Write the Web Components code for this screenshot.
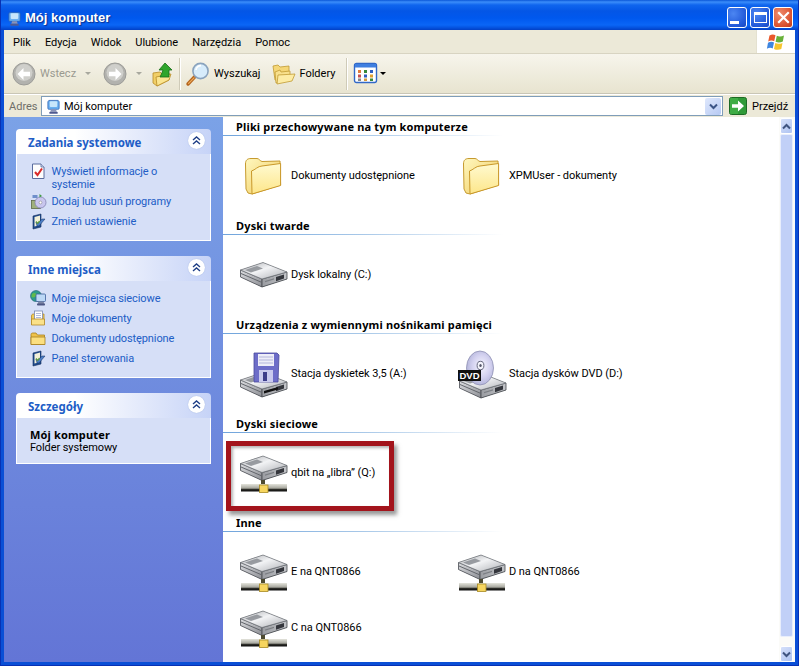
<!DOCTYPE html>
<html lang="pl">
<head>
<meta charset="utf-8">
<title>Mój komputer</title>
<style>
  html, body { margin: 0; height: 100%; overflow: hidden; background: #fff; }
  body { font: 11px Roboto, "Noto Sans", sans-serif; color: #000; }
</style>
</head>
<body>
<xp-window>
  <xp-titlebar slot="title" caption="Mój komputer"></xp-titlebar>
  <xp-menubar slot="menu" items="Plik,Edycja,Widok,Ulubione,Narzędzia,Pomoc"></xp-menubar>
  <xp-toolbar slot="tools"></xp-toolbar>
  <xp-addressbar slot="address" value="Mój komputer"></xp-addressbar>

  <xp-sidebar slot="side">
    <xp-taskpane caption="Zadania systemowe">
      <xp-task icon="sysinfo">Wyświetl informacje o systemie</xp-task>
      <xp-task icon="addremove">Dodaj lub usuń programy</xp-task>
      <xp-task icon="settings">Zmień ustawienie</xp-task>
    </xp-taskpane>
    <xp-taskpane caption="Inne miejsca">
      <xp-task icon="netplaces">Moje miejsca sieciowe</xp-task>
      <xp-task icon="mydocs">Moje dokumenty</xp-task>
      <xp-task icon="sharedfolder">Dokumenty udostępnione</xp-task>
      <xp-task icon="settings">Panel sterowania</xp-task>
    </xp-taskpane>
    <xp-taskpane caption="Szczegóły" details>
      <xp-details name="Mój komputer" kind="Folder systemowy"></xp-details>
    </xp-taskpane>
  </xp-sidebar>

  <xp-content slot="content">
    <xp-section caption="Pliki przechowywane na tym komputerze">
      <xp-item icon="folder">Dokumenty udostępnione</xp-item>
      <xp-item icon="folder">XPMUser - dokumenty</xp-item>
    </xp-section>
    <xp-section caption="Dyski twarde">
      <xp-item icon="drive">Dysk lokalny (C:)</xp-item>
    </xp-section>
    <xp-section caption="Urządzenia z wymiennymi nośnikami pamięci">
      <xp-item icon="floppy">Stacja dyskietek 3,5 (A:)</xp-item>
      <xp-item icon="dvd">Stacja dysków DVD (D:)</xp-item>
    </xp-section>
    <xp-section caption="Dyski sieciowe">
      <xp-item icon="netdrive">qbit na „libra” (Q:)</xp-item>
    </xp-section>
    <xp-section caption="Inne">
      <xp-item icon="netdrive">E na QNT0866</xp-item>
      <xp-item icon="netdrive">D na QNT0866</xp-item>
      <xp-item icon="netdrive">C na QNT0866</xp-item>
    </xp-section>
    <xp-callout></xp-callout>
  </xp-content>

  <xp-scrollbar slot="scroll"></xp-scrollbar>
</xp-window>

<script>
const UI_FONT = 'Roboto, "Noto Sans", sans-serif';
const BOLD_FONT = '"Noto Sans", Roboto, sans-serif';

// hard disk body, drawn in a 48 wide box starting at y
function driveBody(y) {
  return `
  <g transform="translate(0 ${y})">
    <path d="M0.5 8 L23 0.5 L47 10 L47 17 L22 25 L0.5 15Z" fill="#6f7278"/>
    <path d="M0.5 8 L22 17 L22 25 L0.5 15Z" fill="url(#dleft)" stroke="#505359" stroke-width=".8"/>
    <path d="M22 17 L47 10 L47 17 L22 25Z" fill="url(#dright)" stroke="#44474d" stroke-width=".8"/>
    <path d="M0.5 8 L23 0.5 L47 10 L22 17Z" fill="url(#dtop)" stroke="#70747a" stroke-width=".7"/>
    <path d="M5 8 L17 4 L23 6.5 L11 10.5Z" fill="#85888e" opacity=".8"/>
    <path d="M1 11.5 L22 20.5" stroke="#63666c" stroke-width="1"/>
    <path d="M36 15 L44 12.6 L44 16.5 L36 19.2Z" fill="#34363c"/>
    <path d="M25 19 L34 16.2 L34 17.4 L25 20.2Z" fill="#7c7f84"/>
  </g>`;
}

const driveDefs = `
  <defs>
    <linearGradient id="dtop" x1="0" y1="0" x2="1" y2="1">
      <stop offset="0" stop-color="#a8aaae"/><stop offset=".45" stop-color="#f2f3f5"/><stop offset="1" stop-color="#aeb0b5"/>
    </linearGradient>
    <linearGradient id="dleft" x1="0" y1="0" x2="1" y2="1">
      <stop offset="0" stop-color="#dcdde0"/><stop offset="1" stop-color="#8c8e94"/>
    </linearGradient>
    <linearGradient id="dright" x1="0" y1="0" x2="1" y2="0">
      <stop offset="0" stop-color="#9a9ca1"/><stop offset="1" stop-color="#c2c4c8"/>
    </linearGradient>
    <linearGradient id="bar" x1="0" y1="0" x2="0" y2="1">
      <stop offset="0" stop-color="#e4e4dc"/><stop offset=".55" stop-color="#a8a89f"/><stop offset=".75" stop-color="#22221e"/><stop offset="1" stop-color="#111"/>
    </linearGradient>
    <linearGradient id="fold" x1="0" y1="0" x2="0" y2="1">
      <stop offset="0" stop-color="#fffad0"/><stop offset="1" stop-color="#fde68a"/>
    </linearGradient>
    <linearGradient id="foldb" x1="0" y1="0" x2="1" y2="1">
      <stop offset="0" stop-color="#fff8c0"/><stop offset="1" stop-color="#efc858"/>
    </linearGradient>
    <radialGradient id="disc" cx=".55" cy=".45" r=".6">
      <stop offset="0" stop-color="#f6f6ff"/><stop offset=".55" stop-color="#d4d2f0"/><stop offset="1" stop-color="#aeb0d6"/>
    </radialGradient>
  </defs>`;

const ICONS = {
  folder: [48, `${driveDefs}
    <path d="M6 38 L5.5 13 C5.5 9 7.5 7.5 11 7.5 L17 7.5 C19 7.5 20 10 22 10.5 L40 10 L40.6 34 L12 43 L8 42Z" fill="url(#foldb)" stroke="#c69a2e" stroke-width="1"/>
    <path d="M12 43 L11.5 20 C15 19 18 15 22 15 L40.6 12.5 L40.6 34.5Z" fill="url(#fold)" stroke="#c9982a" stroke-width="1" stroke-linejoin="round"/>`],

  drive: [48, `${driveDefs}<g transform="translate(0 12)">${driveBody(0)}</g>`],

  netdrive: [48, `${driveDefs}${driveBody(7.5)}
    <rect x="21" y="32" width="4" height="5" fill="#4d4a30"/>
    <rect x="1" y="36" width="46" height="7.5" fill="url(#bar)"/>
    <rect x="19.5" y="37" width="8.5" height="7.5" fill="#f6d55f" stroke="#a98a24" stroke-width=".8"/>`],

  floppy: [48, `${driveDefs}
    <g transform="translate(0 23)">${driveBody(0)}</g>
    <path d="M24 42 L38 38 L38 40.5 L24 44.5Z" fill="#111"/>
    <path d="M14 4 L37 4 L39 6 L38 33 L14 33Z" fill="#6d6dc8" stroke="#4a4a9c" stroke-width=".8"/>
    <rect x="18" y="5" width="16" height="12" fill="#eeeef8"/>
    <path d="M19 8h14M19 11h14M19 14h14" stroke="#b4b6dc" stroke-width="1"/>
    <rect x="19" y="21" width="14" height="12" fill="#c9caee"/>
    <rect x="23" y="23" width="4" height="9" fill="#3c3d8a"/>`],

  dvd: [48, `${driveDefs}
    <g transform="translate(1 24)">${driveBody(0)}</g>
    <ellipse cx="22" cy="19" rx="13.5" ry="17" fill="url(#disc)" stroke="#8f90b4" stroke-width=".8"/>
    <ellipse cx="22.5" cy="16.5" rx="3.4" ry="4.2" fill="#f3f3fb" stroke="#66687e" stroke-width="1"/>
    <ellipse cx="22.5" cy="16.5" rx="1.2" ry="1.6" fill="#55576a"/>
    <rect x="0" y="21" width="23" height="11" fill="#111"/>
    <text x="11.5" y="30" text-anchor="middle" font-family="Liberation Sans, sans-serif" font-weight="700" font-size="9.5" fill="#fff">DVD</text>`],

  computer: [16, `
    <path d="M3 1.5 H13 L14 3 V10 C14 11 13 11 12 11 H4 C3 11 2 11 2 10 V3Z" fill="#6bb0f0" stroke="#2a5fb0" stroke-width=".8"/>
    <rect x="4" y="2.5" width="8" height="6" rx="1" fill="#c8e6fb"/>
    <path d="M5.5 11h5l1 2.5H4.5Z" fill="#8a94b8"/>
    <rect x="3.5" y="13.5" width="9" height="2.3" rx="1" fill="#4f5a90"/>`],

  back: [24, `
    <circle cx="12" cy="12" r="11" fill="#b2b2ae" stroke="#9c9c98"/>
    <circle cx="12" cy="10.5" r="8.5" fill="#cfcfcb"/>
    <path d="M5.5 12 L11.5 6 V9.8 H18 V14.2 H11.5 V18Z" fill="#fff"/>`],

  forward: [24, `
    <circle cx="12" cy="12" r="11" fill="#b2b2ae" stroke="#9c9c98"/>
    <circle cx="12" cy="10.5" r="8.5" fill="#cfcfcb"/>
    <path d="M18.5 12 L12.5 6 V9.8 H6 V14.2 H12.5 V18Z" fill="#fff"/>`],

  up: [24, `
    <path d="M2 21 L2 11 L9 10 L11 12 L18 11 L18 18 L6 24Z" fill="#f1cf68" stroke="#b88c26" stroke-width=".8"/>
    <path d="M6 24 L5 15 L20 12 L18 18Z" fill="#fbe590" stroke="#b88c26" stroke-width=".8"/>
    <path d="M14 1 L21 8 H18 V15 H9 L10.5 12 L12 8 H8Z" fill="#2fa52c" stroke="#176d17" stroke-width=".8" stroke-linejoin="round"/>`],

  search: [24, `
    <path d="M2 22 L9 14.5" stroke="#b5651d" stroke-width="3.4" stroke-linecap="round"/>
    <path d="M2.6 21.4 L8 15.8" stroke="#eeab5c" stroke-width="1.2" stroke-linecap="round"/>
    <circle cx="14.5" cy="9" r="7.6" fill="#d7ecfb" stroke="#8aa3bd" stroke-width="1.6"/>
    <path d="M10 8 a5 5 0 0 1 5 -4.4" fill="none" stroke="#fff" stroke-width="1.6"/>`],

  folders: [24, `
    <path d="M1 4 L6 3 L8 5 L17 4 V9 L13 18 L3 18Z" fill="#f5d777" stroke="#c09a34" stroke-width=".8"/>
    <path d="M4 21 L3 10 L8 8 L9 10 L18 9 V18 Z" fill="#f8e08c" stroke="#c09a34" stroke-width=".8"/>
    <path d="M5 22 L6 13 L23 12 L20 19 Z" fill="#fdeca4" stroke="#c09a34" stroke-width=".8"/>`],

  views: [24, `
    <rect x=".5" y="1.5" width="22" height="19" rx="2" fill="#fff" stroke="#3168c8" stroke-width="1.4"/>
    <rect x="1" y="2" width="21" height="3.5" fill="#3f7fe0"/>
    <g>
      <rect x="4" y="8" width="3" height="3" fill="#e07a3c"/><rect x="10" y="8" width="3" height="3" fill="#3a8a3c"/><rect x="16" y="8" width="3" height="3" fill="#2f5ec0"/>
      <rect x="4" y="12.5" width="3" height="3" fill="#c94f4f"/><rect x="10" y="12.5" width="3" height="3" fill="#2f5ec0"/><rect x="16" y="12.5" width="3" height="3" fill="#e0a030"/>
      <rect x="4" y="16.5" width="3" height="2.5" fill="#888"/><rect x="10" y="16.5" width="3" height="2.5" fill="#d69a3c"/><rect x="16" y="16.5" width="3" height="2.5" fill="#3a8a3c"/>
    </g>`],

  sysinfo: [16, `
    <path d="M2.5 1 H11 L14 4 V15.5 H2.5Z" fill="#fdfdfd" stroke="#5a6c9e"/>
    <path d="M11 1 V4 H14" fill="#cfd8ee" stroke="#5a6c9e" stroke-width=".8"/>
    <path d="M5 9 L7.5 12 L12 5.5" fill="none" stroke="#d92a2a" stroke-width="2"/>`],

  addremove: [16, `
    <rect x="1.5" y="7.5" width="9" height="8" fill="#9fb07c" stroke="#5e6a48" stroke-width=".8"/>
    <circle cx="10.5" cy="9.5" r="5.5" fill="#c9c6ee" stroke="#7a78a8" stroke-width=".7"/>
    <circle cx="10.5" cy="9.5" r="1.4" fill="#fff" stroke="#777" stroke-width=".5"/>
    <rect x="2.5" y="2" width="5" height="3" fill="#6f8fcb"/>
    <path d="M9.5 1 L12 3 L9.5 4.5Z" fill="#3e9a3e"/>`],

  settings: [16, `
    <path d="M3 3 L11 1 V14 L3 16Z" fill="#1f4a8c" stroke="#122e5c" stroke-width=".6"/>
    <path d="M4.5 4 L10 2.6 V12 L4.5 13.6Z" fill="#f4f1d8"/>
    <path d="M6 9 L7.5 11 L12 6 L15 6 L9 13 L7 13Z" fill="#4d7fc8" stroke="#122e5c" stroke-width=".5"/>
    <path d="M6 8.5 L7.6 10.4 L9.6 8" fill="none" stroke="#5c9a40" stroke-width="1.2"/>`],

  netplaces: [16, `
    <circle cx="6" cy="6" r="5.5" fill="#2f9c8c" stroke="#1c5e70" stroke-width=".6"/>
    <path d="M2 4 C4 2 6 3 7 5 C6 7 3 8 1.5 7Z" fill="#63bb4a"/>
    <rect x="6" y="4" width="9.5" height="7.5" rx="1" fill="#bcd8f6" stroke="#3b5e9a" stroke-width=".8"/>
    <path d="M8.5 11.5 h5 l1 2.5 h-7Z" fill="#7c86a6"/>
    <rect x="7" y="13.5" width="8" height="2" rx=".8" fill="#4e5884"/>`],

  mydocs: [16, `
    <path d="M1.5 14.5 V6 C1.5 4.5 2.5 4 3.5 4 H14 V14.5Z" fill="#f2cd58" stroke="#b2892a" stroke-width=".8"/>
    <rect x="4.5" y="1" width="8" height="9" fill="#fff" stroke="#7b88b0" stroke-width=".8"/>
    <path d="M6 3.5h5M6 5.5h5M6 7.5h5" stroke="#9ca8d0" stroke-width=".8"/>
    <path d="M1.5 15 V9 H14.5 V15Z" fill="#fae18a" stroke="#b2892a" stroke-width=".8"/>`],

  sharedfolder: [16, `
    <path d="M1 14.5 V4.5 C1 3.5 1.8 3 2.5 3 H6 L7.5 5 H14.5 V14.5Z" fill="#eec24c" stroke="#a67f20" stroke-width=".8"/>
    <path d="M1 14.5 V7 H15 V14.5Z" fill="#fbdf80" stroke="#a67f20" stroke-width=".8"/>`],

  flag: [20, `
    <path d="M3.5 3.5 C6 2 8 2.5 9.5 3.2 L8.2 9.2 C6.5 8.4 4.5 8.2 2.2 9.4Z" fill="#e9582d"/>
    <path d="M10.8 3.7 C13 5 15.5 4.6 18 3.4 L16.8 9.5 C14.5 10.6 12 10.9 9.6 9.7Z" fill="#68b13a"/>
    <path d="M2 10.7 C4.5 9.5 6.5 9.7 8 10.5 L6.7 16.5 C5.2 15.6 3 15.5 .9 16.7Z" fill="#3f86e0"/>
    <path d="M9.3 11 C11.5 12.2 14 12 16.5 10.9 L15.3 17 C13 18 10.5 18.2 8 17Z" fill="#f5c52f"/>`],

  go: [18, `
    <rect x=".5" y=".5" width="17" height="17" rx="2" fill="#2f9a38" stroke="#1c6a24"/>
    <rect x="1" y="1" width="8" height="16" fill="#4dbc50" opacity=".55"/>
    <path d="M3 7.2 H9 V3.5 L15 9 L9 14.5 V10.8 H3Z" fill="#fff"/>`]
};

class XpIcon extends HTMLElement {
  connectedCallback() {
    const [box, body] = ICONS[this.getAttribute("name")] || [16, ""];
    const size = this.getAttribute("size") || box;
    this.attachShadow({ mode: "open" }).innerHTML = `
      <style>:host{display:block;width:${size}px;height:${size}px;flex:none} svg{display:block;overflow:visible}</style>
      <svg width="${size}" height="${size}" viewBox="0 0 ${box} ${box}" aria-hidden="true">${body}</svg>`;
  }
}
customElements.define("xp-icon", XpIcon);

class XpWindow extends HTMLElement {
  constructor() {
    super();
    this.attachShadow({ mode: "open" }).innerHTML = `
      <style>
        :host{display:flex;flex-direction:column;width:799px;height:666px;overflow:hidden;position:relative}
        .frame{flex:1;min-height:0;display:flex;flex-direction:column;
          border:solid #0a4fd6;border-width:0 4px 4px}
        .main{flex:1;min-height:0;display:grid;grid-template-columns:219px minmax(0,1fr) 16px;grid-template-rows:minmax(0,1fr)}
        .edge{position:absolute;inset:0;pointer-events:none;border:1px solid #0831b4;border-top:0}
      </style>
      <slot name="title"></slot>
      <div class="frame">
        <slot name="menu"></slot>
        <slot name="tools"></slot>
        <slot name="address"></slot>
        <div class="main">
          <slot name="side"></slot>
          <slot name="content"></slot>
          <slot name="scroll"></slot>
        </div>
      </div>
      <div class="edge"></div>`;
  }
}
customElements.define("xp-window", XpWindow);

class XpTitlebar extends HTMLElement {
  connectedCallback() {
    this.attachShadow({ mode: "open" }).innerHTML = `
      <style>
        :host{display:flex;align-items:center;height:30px;box-sizing:border-box;padding:0 6px 0 7px;
          background:linear-gradient(180deg,#0a57d8 0,#3b8dfa 2px,#0f65ee 5px,#0456e6 11px,#0058ee 18px,#0a66f6 25px,#0450dc 28px,#0340c4 30px)}
        .cap{margin-left:3px;font:700 13px "Liberation Sans",sans-serif;color:#fff;text-shadow:1px 1px 1px #0a2f90;flex:1;padding-top:5px}
        .ico{margin-top:6px}
        .btns{display:flex;gap:3px;margin-top:5px}
        .b{width:20px;height:21px;box-sizing:border-box;border:1px solid #fff;border-radius:3px;display:grid;place-items:center;
          background:radial-gradient(circle at 30% 30%,#4c86f2,#2158d8 70%,#1a48c0)}
        .x{background:radial-gradient(circle at 30% 30%,#ef8c6e,#d9502e 70%,#b83a1c)}
        .min i{display:block;width:9px;height:3px;background:#fff;margin:9px 5px 0 0}
        .max i{display:block;width:13px;height:11px;box-sizing:border-box;border:1px solid #fff;border-top-width:3px}
      </style>
      <xp-icon class="ico" name="computer" size="15"></xp-icon>
      <span class="cap">${this.getAttribute("caption")}</span>
      <div class="btns">
        <div class="b min"><i></i></div>
        <div class="b max"><i></i></div>
        <div class="b x"><svg width="13" height="13" viewBox="0 0 13 13"><path d="M2 2 L11 11 M11 2 L2 11" stroke="#fff" stroke-width="2.2" stroke-linecap="square"/></svg></div>
      </div>`;
  }
}
customElements.define("xp-titlebar", XpTitlebar);

class XpMenubar extends HTMLElement {
  connectedCallback() {
    const items = this.getAttribute("items").split(",").map(t => `<span>${t}</span>`).join("");
    this.attachShadow({ mode: "open" }).innerHTML = `
      <style>
        :host{display:flex;align-items:stretch;height:24px;box-sizing:border-box;background:#ece9d8;border-bottom:1px solid #d8d4c2}
        nav{flex:1;display:flex;align-items:center;gap:14px;padding:1px 0 0 9px;font:11px ${UI_FONT};color:#000}
        .flag{width:38px;background:#fff;border-left:1px solid #e4e1d0;display:grid;place-items:center}
      </style>
      <nav>${items}</nav>
      <div class="flag"><xp-icon name="flag"></xp-icon></div>`;
  }
}
customElements.define("xp-menubar", XpMenubar);

class XpToolbar extends HTMLElement {
  connectedCallback() {
    this.attachShadow({ mode: "open" }).innerHTML = `
      <style>
        :host{display:flex;align-items:center;height:40px;box-sizing:border-box;padding-left:8px;
          background:linear-gradient(180deg,#f7f5ec,#ece9d8 70%,#e8e4d0);
          font:11px ${UI_FONT};color:#000;border-bottom:1px solid #c9c6b6}
        .off{color:#9a9a90}
        .caret{width:0;height:0;border:solid transparent;border-width:3px 3px 0;border-top-color:#a8a89e}
        .dark{border-top-color:#000}
        .sep{width:1px;height:32px;background:#cfcbb8;border-right:1px solid #fff}
      </style>
      <xp-icon name="back"></xp-icon>
      <span class="off" style="margin-left:4px">Wstecz</span>
      <i class="caret" style="margin-left:9px"></i>
      <xp-icon name="forward" style="margin-left:12px"></xp-icon>
      <i class="caret" style="margin-left:9px"></i>
      <xp-icon name="up" style="margin-left:9px"></xp-icon>
      <i class="sep" style="margin-left:4px"></i>
      <xp-icon name="search" style="margin-left:5px"></xp-icon>
      <span style="margin-left:4px">Wyszukaj</span>
      <xp-icon name="folders" style="margin-left:12px"></xp-icon>
      <span style="margin-left:3px">Foldery</span>
      <i class="sep" style="margin-left:11px"></i>
      <xp-icon name="views" style="margin-left:6px"></xp-icon>
      <i class="caret dark" style="margin-left:2px"></i>`;
  }
}
customElements.define("xp-toolbar", XpToolbar);

class XpAddressbar extends HTMLElement {
  connectedCallback() {
    this.attachShadow({ mode: "open" }).innerHTML = `
      <style>
        :host{display:flex;align-items:center;height:23px;box-sizing:border-box;background:#ece9d8;padding-left:5px;
          font:11px ${UI_FONT};color:#000;border-top:1px solid #fff}
        .lbl{color:#6f6f68;width:32px}
        .box{width:682px;height:20px;box-sizing:border-box;border:1px solid #7f9db9;background:#fff;display:flex;align-items:center;padding-left:4px;gap:3px}
        .val{flex:1}
        .drop{width:16px;height:17px;margin-right:1px;border-radius:2px;background:linear-gradient(135deg,#dfe8fc,#b6c9f3);display:grid;place-items:center}
        .go{margin-left:6px}
        .gt{margin-left:5px}
      </style>
      <span class="lbl">Adres</span>
      <div class="box">
        <xp-icon name="computer" size="15"></xp-icon>
        <span class="val">${this.getAttribute("value")}</span>
        <div class="drop"><svg width="9" height="7" viewBox="0 0 9 7"><path d="M1 1.5 L4.5 5 L8 1.5" fill="none" stroke="#3b5486" stroke-width="2"/></svg></div>
      </div>
      <xp-icon class="go" name="go"></xp-icon>
      <span class="gt">Przejdź</span>`;
  }
}
customElements.define("xp-addressbar", XpAddressbar);

class XpSidebar extends HTMLElement {
  constructor() {
    super();
    this.attachShadow({ mode: "open" }).innerHTML = `
      <style>
        :host{display:flex;flex-direction:column;gap:15px;box-sizing:border-box;height:100%;padding:12px 12px 0;
          background:linear-gradient(180deg,#7ba2e7,#6375d6)}
      </style>
      <slot></slot>`;
  }
}
customElements.define("xp-sidebar", XpSidebar);

class XpTaskpane extends HTMLElement {
  connectedCallback() {
    this.attachShadow({ mode: "open" }).innerHTML = `
      <style>
        :host{display:block;width:195px;font:11px ${UI_FONT}}
        header{height:25px;box-sizing:border-box;display:flex;align-items:center;justify-content:space-between;padding:0 6px 0 12px;
          border-radius:4px 4px 0 0;background:linear-gradient(90deg,#fff 0,#fff 30%,#c6d3f7 100%)}
        h2{margin:0;padding-top:2px;font:700 11.5px ${BOLD_FONT};color:#215dc6}
        .body{box-sizing:border-box;background:#d6dff7;border:1px solid #fff;border-top:0;padding:7px 12px 9px 13px}
        :host([details]) .body{padding:10px 12px 9px 13px}
        .chev{width:17px;height:17px;border-radius:50%;background:#fff;box-shadow:0 0 1px #8fa6d8;display:grid;place-items:center;margin-top:-2px}
      </style>
      <header>
        <h2>${this.getAttribute("caption")}</h2>
        <div class="chev"><svg width="9" height="9" viewBox="0 0 9 9"><path d="M1 4 L4.5 1 L8 4 M1 8 L4.5 5 L8 8" fill="none" stroke="#1f3f86" stroke-width="1.4"/></svg></div>
      </header>
      <div class="body"><slot></slot></div>`;
  }
}
customElements.define("xp-taskpane", XpTaskpane);

class XpTask extends HTMLElement {
  connectedCallback() {
    this.attachShadow({ mode: "open" }).innerHTML = `
      <style>
        :host{display:flex;align-items:flex-start;gap:5.5px;min-height:20px;box-sizing:border-box;font:11px/13px ${UI_FONT};letter-spacing:-.1px;color:#215dc6}
        xp-icon{margin-top:2px}
        .t{padding-top:4px}
      </style>
      <xp-icon name="${this.getAttribute("icon")}"></xp-icon>
      <span class="t"><slot></slot></span>`;
  }
}
customElements.define("xp-task", XpTask);

class XpDetails extends HTMLElement {
  connectedCallback() {
    this.attachShadow({ mode: "open" }).innerHTML = `
      <style>
        :host{display:block;font:11px/13px ${UI_FONT};letter-spacing:-.1px;color:#000}
        b{display:block;font:700 11px/13px ${BOLD_FONT};letter-spacing:.15px}
      </style>
      <b>${this.getAttribute("name")}</b>${this.getAttribute("kind")}`;
  }
}
customElements.define("xp-details", XpDetails);

class XpContent extends HTMLElement {
  constructor() {
    super();
    this.attachShadow({ mode: "open" }).innerHTML = `
      <style>:host{display:block;position:relative;background:#fff;overflow:hidden;height:100%}</style>
      <slot></slot>`;
  }
}
customElements.define("xp-content", XpContent);

class XpSection extends HTMLElement {
  connectedCallback() {
    this.attachShadow({ mode: "open" }).innerHTML = `
      <style>
        :host{display:block}
        h3{margin:0;height:18px;padding-left:13px;font:700 11px/19px ${BOLD_FONT};letter-spacing:.16px;color:#000}
        .rule{width:280px;height:1px;background:linear-gradient(90deg,#70a4dc,#a8c8e8 50%,#fff)}
        .grid{display:grid;grid-template-columns:218px 218px;grid-auto-rows:56px;padding:11px 0 13px 17px}
      </style>
      <h3>${this.getAttribute("caption")}</h3>
      <div class="rule"></div>
      <div class="grid"><slot></slot></div>`;
  }
}
customElements.define("xp-section", XpSection);

class XpItem extends HTMLElement {
  connectedCallback() {
    this.attachShadow({ mode: "open" }).innerHTML = `
      <style>
        :host{display:flex;align-items:center;gap:3px;font:11px ${UI_FONT};letter-spacing:-.05px;color:#000}
      </style>
      <xp-icon name="${this.getAttribute("icon")}"></xp-icon>
      <span><slot></slot></span>`;
  }
}
customElements.define("xp-item", XpItem);

// red highlight drawn over the "Dyski sieciowe" entry
class XpCallout extends HTMLElement {
  constructor() {
    super();
    this.attachShadow({ mode: "open" }).innerHTML = `
      <style>
        :host{position:absolute;left:3px;top:324px;width:168px;height:70px;box-sizing:border-box;
          border:5px solid #a3141c;box-shadow:3px 4px 4px rgba(70,70,70,.55), inset 2px 2px 3px rgba(90,90,90,.45)}
      </style>`;
  }
}
customElements.define("xp-callout", XpCallout);

class XpScrollbar extends HTMLElement {
  constructor() {
    super();
    const arrow = d => `<svg width="9" height="7" viewBox="0 0 9 7"><path d="${d}" fill="none" stroke="#3f5480" stroke-width="2"/></svg>`;
    this.attachShadow({ mode: "open" }).innerHTML = `
      <style>
        :host{display:flex;flex-direction:column;box-sizing:border-box;width:16px;height:100%;padding:1px 2px 0 1px;background:#fbfbf8}
        .btn{height:16px;flex:none;border:1px solid #fff;border-radius:2px;box-sizing:border-box;background:linear-gradient(135deg,#d5e0fa,#aec3f2);display:grid;place-items:center}
        .thumb{flex:1;margin-bottom:9px;border:1px solid #e8eefc;border-radius:2px;background:#c1d0f7}
      </style>
      <div class="btn">${arrow("M1 5.5 L4.5 2 L8 5.5")}</div>
      <div class="thumb"></div>
      <div class="btn">${arrow("M1 1.5 L4.5 5 L8 1.5")}</div>`;
  }
}
customElements.define("xp-scrollbar", XpScrollbar);
</script>
</body>
</html>
